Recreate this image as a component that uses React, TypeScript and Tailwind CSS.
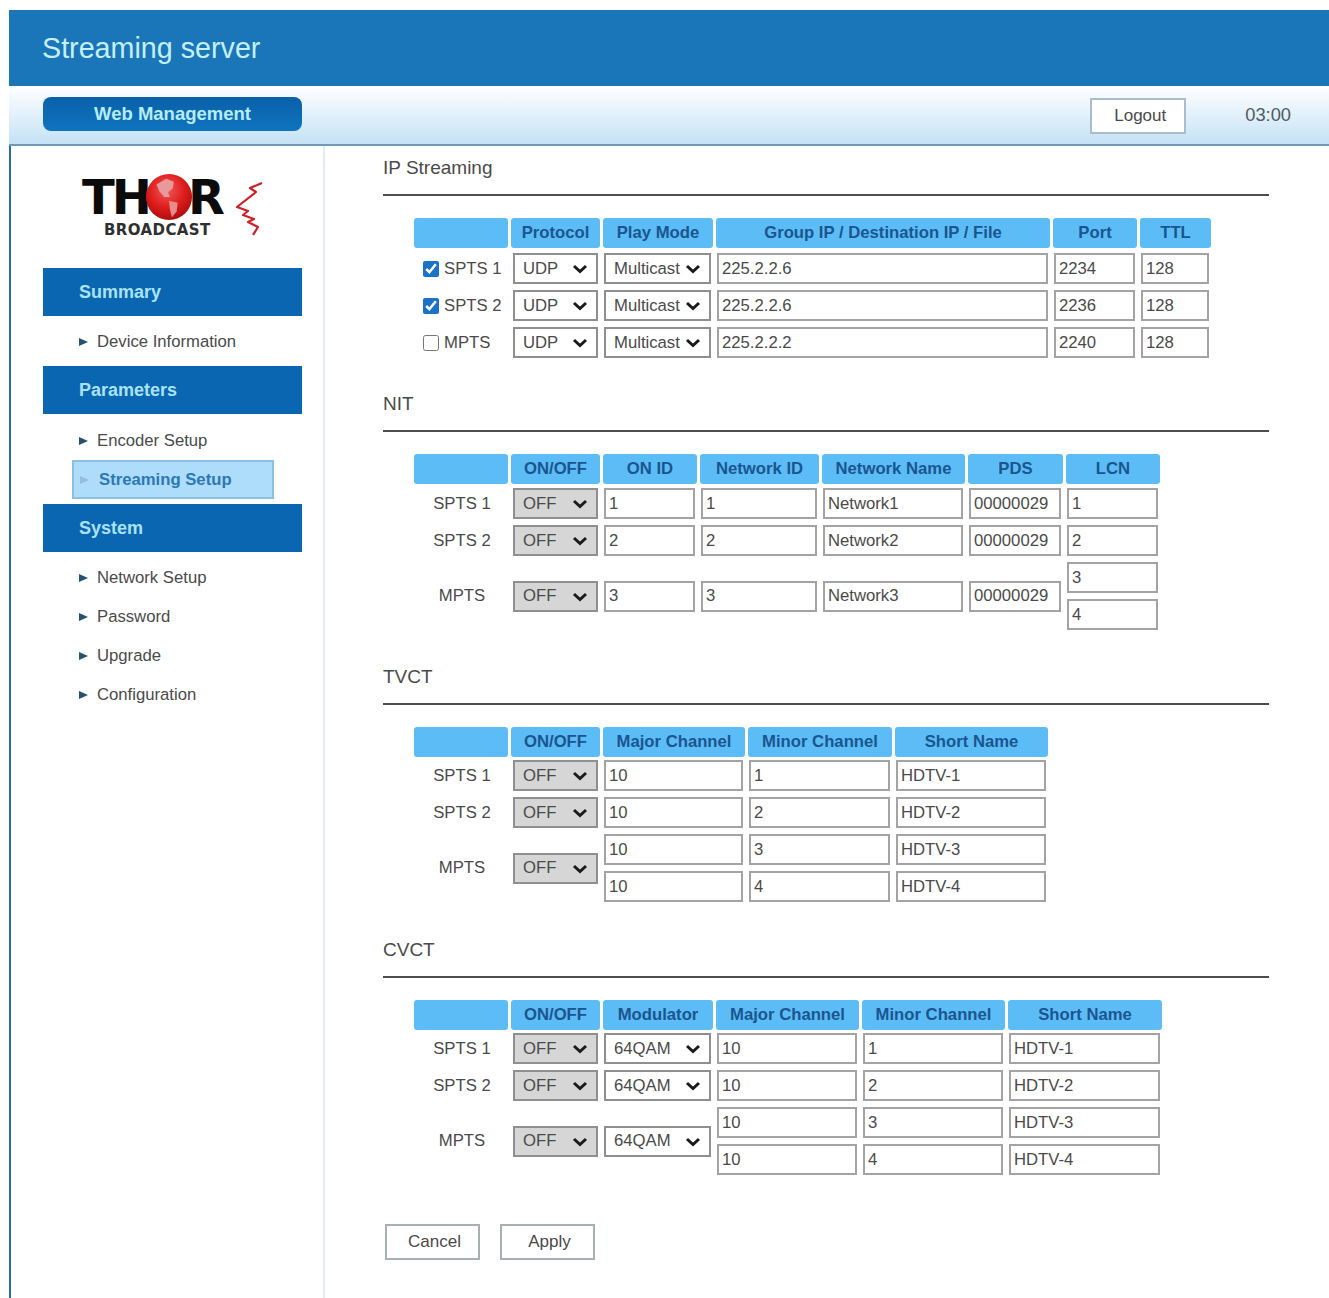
const sans = "font-['Liberation_Sans',Arial,sans-serif]";

function Opt({ value, gray, narrow }: { value: string; gray?: boolean; narrow?: boolean }) {
  return (
    <div className={`relative h-[31px] ${narrow ? 'ml-[1px] w-[85px]' : 'w-full'}`}>
      <select
        defaultValue={value}
        className={`appearance-none w-full h-[31px] border-2 border-[#8f8f8f] pl-[8px] text-[16.7px] text-[#4a4a4a] ${gray ? 'bg-[#d6d6d6]' : 'bg-white'}`}
      >
        <option>{value}</option>
      </select>
      <svg width="16" height="10" viewBox="0 0 16 10" className="absolute right-[10px] top-[11px] pointer-events-none">
        <path d="M2 2 L8 7.5 L14 2" fill="none" stroke="#1a1a1a" strokeWidth="3" />
      </svg>
    </div>
  );
}

function Field({ value }: { value: string }) {
  return (
    <input
      defaultValue={value}
      className="w-full h-[31px] border-2 border-[#a3a3a3] bg-white px-[3px] text-[16.7px] text-[#4a4a4a]"
    />
  );
}

function Head({ children }: { children?: string }) {
  return (
    <div className="h-[30px] rounded-[3px] bg-[#5cbdf6] flex items-center justify-center text-[16.7px] font-bold text-[#1b5590] whitespace-nowrap">
      {children}
    </div>
  );
}

function RowLabel({ children, span }: { children: string; span?: boolean }) {
  return (
    <div className={`flex items-center justify-center pl-[2px] text-[16.7px] text-[#4a4a4a] ${span ? 'row-span-2' : ''}`}>
      {children}
    </div>
  );
}

function Cell({ children, span }: { children: React.ReactNode; span?: boolean }) {
  return <div className={`flex items-center pl-[1px] pr-[2px] ${span ? 'row-span-2' : ''}`}>{children}</div>;
}

function Section({ title, className, children }: { title: string; className?: string; children: React.ReactNode }) {
  return (
    <section className={className}>
      <h2 className="h-[38px] text-[19px] leading-[24px] text-[#4a4a4a]">{title}</h2>
      <div className="h-[2px] w-[886px] bg-[#4d4d4d]" />
      <div className="ml-[31px] mt-[22px]">{children}</div>
    </section>
  );
}

function MenuTitle({ children }: { children: string }) {
  return (
    <div className="h-[48px] w-[259px] bg-[#0a66b0] pl-[36px] flex items-center text-[18px] font-bold text-[#a9e2f7]">
      {children}
    </div>
  );
}

function MenuItem({ children, active }: { children: string; active?: boolean }) {
  return (
    <div
      className={`flex items-center text-[16.7px] h-[39px] ${
        active
          ? 'ml-[29px] w-[202px] gap-[10px] border-2 border-[#8ebfe0] bg-[#aedcfb] pl-[6px] font-bold text-[#2b78b5]'
          : 'ml-[36px] gap-[9px] text-[#4a4a4a]'
      }`}
    >
      <span className={`h-0 w-0 border-y-[4px] border-l-[9px] border-y-transparent ${active ? 'border-l-[#93bfdd]' : 'border-l-[#25506f]'}`} />
      {children}
    </div>
  );
}

function Logo() {
  return (
    <div className="relative ml-[71px] h-[122px] w-[190px]">
      <div className="flex items-center h-[96px] pt-[6px] font-['DejaVu_Sans',sans-serif] font-bold text-[#0b0b0b] text-[48px] leading-[44px] tracking-[-3px]">
        <span>TH</span>
        <svg width="48" height="48" viewBox="0 0 50 50" className="ml-[-4px] mr-[-5px] shrink-0">
          <defs>
            <radialGradient id="globe" cx="45%" cy="35%" r="65%">
              <stop offset="0" stopColor="#f15a5a" />
              <stop offset="0.6" stopColor="#de1c1c" />
              <stop offset="1" stopColor="#b00d0d" />
            </radialGradient>
          </defs>
          <circle cx="25" cy="25" r="24" fill="url(#globe)" />
          <path d="M12 12 L22 6 L30 9 L29 16 L24 20 L26 25 L20 25 L15 19 Z" fill="#e89a9a" />
          <path d="M25 29 L34 31 L33 40 L28 46 L26 38 Z" fill="#e58c8c" />
        </svg>
        <span>R</span>
      </div>
      <div className="absolute left-[22px] top-[76px] font-['DejaVu_Sans',sans-serif] font-bold text-[15px] leading-[16px] tracking-[0.4px] text-[#2f2f2f]">
        BROADCAST
      </div>
      <svg width="30" height="56" viewBox="0 0 30 56" className="absolute left-[152px] top-[36px]">
        <path
          d="M28 1 L16 6 L22 10 L3 25 L14 29 L9 33 L20 37 L14 40 L24 45 L19 53"
          fill="none"
          stroke="#cf2027"
          strokeWidth="2.2"
          strokeLinejoin="round"
        />
      </svg>
    </div>
  );
}

export default function App() {
  return (
    <div className={`${sans} min-h-[1298px] w-[1329px] bg-white pt-[10px] pl-[9px] overflow-hidden`}>
      <header className="h-[76px] w-[1320px] bg-[#1a76b9] pl-[33px] pt-[2px] flex items-center text-[28.7px] text-[#c4effb]">
        Streaming server
      </header>
      <div className="h-[60px] w-[1320px] bg-gradient-to-b from-white to-[#c4e2f5] border-b-2 border-[#6f9ab8] pl-[34px] pr-[38px] flex items-center">
        <div className="mb-[2px] h-[34px] w-[259px] rounded-[8px] bg-gradient-to-b from-[#0a60a8] to-[#0f74c0] flex items-center justify-center text-[18.5px] font-bold text-[#b6ecf7]">
          Web Management
        </div>
        <button className="ml-auto mt-[2px] h-[36px] w-[96px] border-2 border-[#a9bdcb] bg-white pl-[4px] text-[17px] text-[#4a4a4a]">
          Logout
        </button>
        <span className="ml-[59px] text-[18.3px] text-[#4f5b63]">03:00</span>
      </div>
      <div className="flex h-[1153px] border-l-2 border-[#2a6c9c]">
        <aside className="w-[314px] shrink-0 border-r-2 border-[#dcedf7] pl-[32px]">
          <div className="-ml-[32px]"><Logo /></div>
          <MenuTitle>Summary</MenuTitle>
          <div className="h-[50px] pt-[2px] flex items-center"><MenuItem>Device Information</MenuItem></div>
          <MenuTitle>Parameters</MenuTitle>
          <div className="pt-[7px] pb-[5px]">
            <MenuItem>Encoder Setup</MenuItem>
            <MenuItem active>Streaming Setup</MenuItem>
          </div>
          <MenuTitle>System</MenuTitle>
          <div className="pt-[6px]">
            <MenuItem>Network Setup</MenuItem>
            <MenuItem>Password</MenuItem>
            <MenuItem>Upgrade</MenuItem>
            <MenuItem>Configuration</MenuItem>
          </div>
        </aside>
        <main className="pl-[58px] pt-[10px]">
          <Section title="IP Streaming">
            <div className="grid grid-cols-[94px_89px_110px_334px_84px_71px] grid-rows-[32px] auto-rows-[37px] gap-x-[3px]">
              <Head />
              <Head>Protocol</Head>
              <Head>Play Mode</Head>
              <Head>Group IP / Destination IP / File</Head>
              <Head>Port</Head>
              <Head>TTL</Head>
              {[
                ['SPTS 1', true, '225.2.2.6', '2234'],
                ['SPTS 2', true, '225.2.2.6', '2236'],
                ['MPTS', false, '225.2.2.2', '2240'],
              ].map(([name, on, ip, port]) => (
                <div key={name as string} className="contents">
                  <label className="flex items-center gap-[5px] pl-[9px] text-[16.7px] text-[#4a4a4a]">
                    <input type="checkbox" defaultChecked={on as boolean} className="h-[16px] w-[16px] accent-[#1a73c9]" />
                    {name as string}
                  </label>
                  <Cell><Opt value="UDP" narrow /></Cell>
                  <Cell><Opt value="Multicast" /></Cell>
                  <Cell><Field value={ip as string} /></Cell>
                  <Cell><Field value={port as string} /></Cell>
                  <Cell><Field value="128" /></Cell>
                </div>
              ))}
            </div>
          </Section>

          <Section title="NIT" className="mt-[31px]">
            <div className="grid grid-cols-[94px_89px_94px_119px_143px_95px_94px] grid-rows-[31px] auto-rows-[37px] gap-x-[3px]">
              <Head />
              <Head>ON/OFF</Head>
              <Head>ON ID</Head>
              <Head>Network ID</Head>
              <Head>Network Name</Head>
              <Head>PDS</Head>
              <Head>LCN</Head>
              {['1', '2'].map((n) => (
                <div key={n} className="contents">
                  <RowLabel>{`SPTS ${n}`}</RowLabel>
                  <Cell><Opt value="OFF" gray narrow /></Cell>
                  <Cell><Field value={n} /></Cell>
                  <Cell><Field value={n} /></Cell>
                  <Cell><Field value={`Network${n}`} /></Cell>
                  <Cell><Field value="00000029" /></Cell>
                  <Cell><Field value={n} /></Cell>
                </div>
              ))}
              <RowLabel span>MPTS</RowLabel>
              <Cell span><Opt value="OFF" gray narrow /></Cell>
              <Cell span><Field value="3" /></Cell>
              <Cell span><Field value="3" /></Cell>
              <Cell span><Field value="Network3" /></Cell>
              <Cell span><Field value="00000029" /></Cell>
              <Cell><Field value="3" /></Cell>
              <Cell><Field value="4" /></Cell>
            </div>
          </Section>

          <Section title="TVCT" className="mt-[32px]">
            <div className="grid grid-cols-[94px_89px_142px_144px_153px] grid-rows-[30px] auto-rows-[37px] gap-x-[3px]">
              <Head />
              <Head>ON/OFF</Head>
              <Head>Major Channel</Head>
              <Head>Minor Channel</Head>
              <Head>Short Name</Head>
              {['1', '2'].map((n) => (
                <div key={n} className="contents">
                  <RowLabel>{`SPTS ${n}`}</RowLabel>
                  <Cell><Opt value="OFF" gray narrow /></Cell>
                  <Cell><Field value="10" /></Cell>
                  <Cell><Field value={n} /></Cell>
                  <Cell><Field value={`HDTV-${n}`} /></Cell>
                </div>
              ))}
              <RowLabel span>MPTS</RowLabel>
              <Cell span><Opt value="OFF" gray narrow /></Cell>
              <Cell><Field value="10" /></Cell>
              <Cell><Field value="3" /></Cell>
              <Cell><Field value="HDTV-3" /></Cell>
              <Cell><Field value="10" /></Cell>
              <Cell><Field value="4" /></Cell>
              <Cell><Field value="HDTV-4" /></Cell>
            </div>
          </Section>

          <Section title="CVCT" className="mt-[33px]">
            <div className="grid grid-cols-[94px_89px_110px_143px_143px_154px] grid-rows-[30px] auto-rows-[37px] gap-x-[3px]">
              <Head />
              <Head>ON/OFF</Head>
              <Head>Modulator</Head>
              <Head>Major Channel</Head>
              <Head>Minor Channel</Head>
              <Head>Short Name</Head>
              {['1', '2'].map((n) => (
                <div key={n} className="contents">
                  <RowLabel>{`SPTS ${n}`}</RowLabel>
                  <Cell><Opt value="OFF" gray narrow /></Cell>
                  <Cell><Opt value="64QAM" /></Cell>
                  <Cell><Field value="10" /></Cell>
                  <Cell><Field value={n} /></Cell>
                  <Cell><Field value={`HDTV-${n}`} /></Cell>
                </div>
              ))}
              <RowLabel span>MPTS</RowLabel>
              <Cell span><Opt value="OFF" gray narrow /></Cell>
              <Cell span><Opt value="64QAM" /></Cell>
              <Cell><Field value="10" /></Cell>
              <Cell><Field value="3" /></Cell>
              <Cell><Field value="HDTV-3" /></Cell>
              <Cell><Field value="10" /></Cell>
              <Cell><Field value="4" /></Cell>
              <Cell><Field value="HDTV-4" /></Cell>
            </div>
          </Section>

          <div className="mt-[46px] flex gap-[20px] pl-[2px]">
            <button className="h-[36px] w-[95px] border-2 border-[#a7b0b0] bg-white pl-[4px] text-[17px] text-[#4a4a4a]">Cancel</button>
            <button className="h-[36px] w-[95px] border-2 border-[#a7b0b0] bg-white pl-[4px] text-[17px] text-[#4a4a4a]">Apply</button>
          </div>
        </main>
      </div>
    </div>
  );
}
